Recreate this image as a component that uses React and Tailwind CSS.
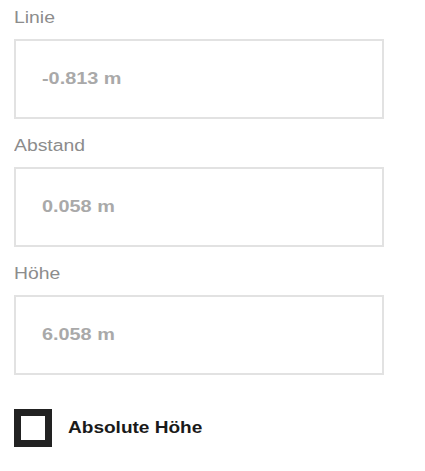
import React from "react";

const fields = [
  { label: "Linie", value: "-0.813 m" },
  { label: "Abstand", value: "0.058 m" },
  { label: "Höhe", value: "6.058 m" },
];

const Field = ({ label, value }) => (
  <div className="flex flex-col">
    <label className="text-[16px] leading-[20px] text-[#8c8c8c]">
      <span className="inline-block origin-left scale-x-[1.21]">{label}</span>
    </label>
    <div className="mt-[11px] w-[370px] h-[80px] border-2 border-[#e2e2e2] bg-white flex items-center pl-[26px]">
      <span className="inline-block origin-left scale-x-[1.24] text-[16px] font-bold text-[#a9a9a9]">
        {value}
      </span>
    </div>
  </div>
);

export default function App() {
  return (
    <div
      className="w-[425px] h-[471px] bg-white pl-[14px] pt-[8px]"
      style={{ fontFamily: '"Liberation Sans", Arial, sans-serif' }}
    >
      <div className="flex flex-col gap-[17px]">
        {fields.map((f) => (
          <Field key={f.label} label={f.label} value={f.value} />
        ))}
      </div>

      {/* Checkbox */}
      <label className="mt-[34px] flex items-center gap-[16px] cursor-pointer">
        <span className="w-[38px] h-[38px] border-[7px] border-[#222222] bg-white" />
        <span className="inline-block origin-left scale-x-[1.19] text-[16px] font-bold text-[#1a1a1a]">
          Absolute Höhe
        </span>
      </label>
    </div>
  );
}
